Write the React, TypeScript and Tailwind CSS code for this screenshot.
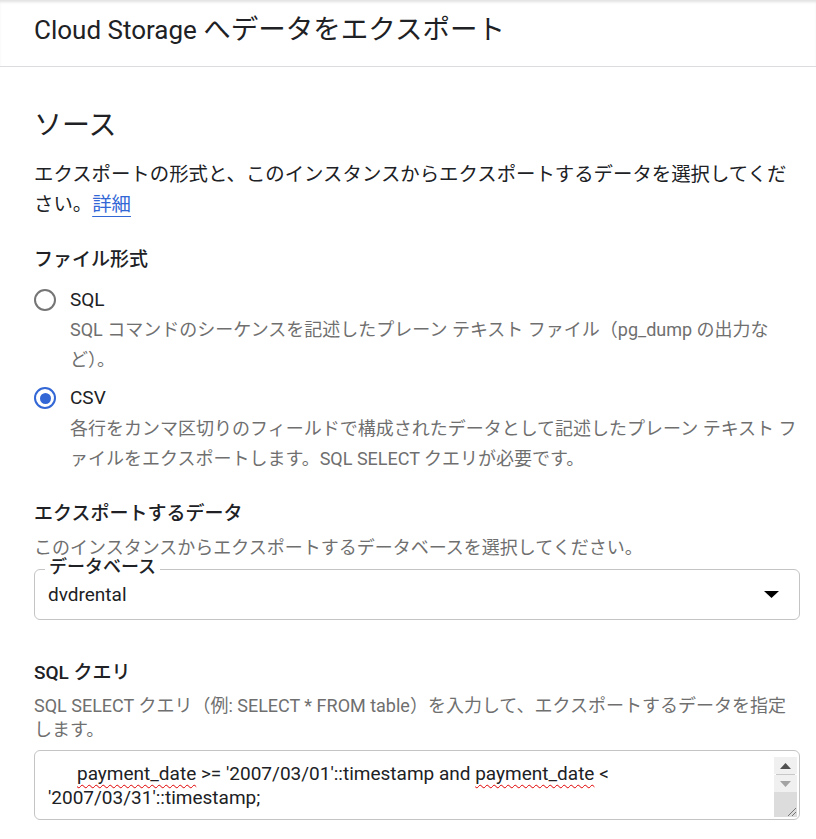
import React from "react";

const FONT = "font-['Roboto','Noto_Sans_CJK_JP',sans-serif]";

function Radio({ checked }: { checked: boolean }) {
  return (
    <div
      className={`relative w-[22px] h-[22px] rounded-full border-[2.5px] shrink-0 flex items-center justify-center ${
        checked ? "border-[#3367d6]" : "border-[#757575]"
      }`}
    >
      {checked && <div className="w-[11px] h-[11px] rounded-full bg-[#3367d6]" />}
    </div>
  );
}

export default function App() {
  return (
    <div className={`${FONT} bg-white text-[#202124] w-[816px] h-[839px] overflow-hidden`}>
      {/* header */}
      <div className="h-[67px] flex items-center pb-[6px] pl-[34px] border-b border-[#dadce0] shadow-[inset_0_3px_3px_-1px_rgba(0,0,0,0.12)]">
        <h1 className="text-[26px] leading-[34px] font-normal">
          Cloud Storage <span className="text-[27.5px]">へデータをエクスポート</span>
        </h1>
      </div>

      <div className="pl-[34px] pr-[16px]">
        <h2 className="mt-[41px] text-[28px] leading-[36px] font-normal">ソース</h2>
        <p className="mt-[16px] text-[19.4px] leading-[30px]">
          エクスポートの形式と、このインスタンスからエクスポートするデータを選択してください。
          <a className="text-[#3367d6] underline underline-offset-[5px] decoration-1">詳細</a>
        </p>

        <h3 className="mt-[26px] text-[19px] leading-[28px] font-medium">ファイル形式</h3>

        <div className="mt-[12px] flex items-center gap-[14px] h-[28px]">
          <Radio checked={false} />
          <span className="text-[19px] leading-[28px]">SQL</span>
        </div>
        <p className="mt-[1px] pl-[36px] text-[18px] leading-[29.5px] text-[#6f6f6f]">
          SQL コマンドのシーケンスを記述したプレーン テキスト ファイル（pg_dump の出力など）。
        </p>

        <div className="mt-[10px] flex items-center gap-[14px] h-[28px]">
          <Radio checked={true} />
          <span className="text-[19px] leading-[28px]">CSV</span>
        </div>
        <p className="mt-[2px] pl-[36px] text-[18px] leading-[29.5px] text-[#6f6f6f]">
          各行をカンマ区切りのフィールドで構成されたデータとして記述したプレーン テキスト ファイルをエクスポートします。SQL SELECT クエリが必要です。
        </p>

        <h3 className="mt-[27px] text-[19px] leading-[28px] font-medium">エクスポートするデータ</h3>
        <p className="mt-[7px] text-[18px] leading-[26px] text-[#6f6f6f]">
          このインスタンスからエクスポートするデータベースを選択してください。
        </p>

        <div className="relative mt-[8px] h-[51px] border border-[#c4c4c4] rounded-[6px] flex items-center pl-[13px] pr-[20px]">
          <span className="absolute left-[10px] top-[-15px] bg-white px-[4px] text-[18px] leading-[24px] font-medium">
            データベース
          </span>
          <span className="flex-1 text-[19px] leading-[28px]">dvdrental</span>
          <svg width="15" height="7" viewBox="0 0 15 7">
            <path d="M0 0 L15 0 L7.5 7 Z" fill="#000" />
          </svg>
        </div>

        <h3 className="mt-[39px] text-[19px] leading-[28px] font-medium">SQL クエリ</h3>
        <p className="mt-[7px] text-[18px] leading-[24px] text-[#6f6f6f]">
          SQL SELECT クエリ（例: SELECT * FROM table）を入力して、エクスポートするデータを指定します。
        </p>

        <div className="mt-[8px] h-[70px] border border-[#c4c4c4] rounded-[6px] flex overflow-hidden">
          <div className="flex-1 pl-[13px] pt-[11px] text-[19px] leading-[24px] whitespace-pre">
            <div className="pl-[29px]">
              <span className="underline decoration-wavy decoration-[#e00000] decoration-1 underline-offset-[4px]">payment_date</span>
              {" >= '2007/03/01'::timestamp and "}
              <span className="underline decoration-wavy decoration-[#e00000] decoration-1 underline-offset-[4px]">payment_date</span>
              {" <"}
            </div>
            <div>'2007/03/31'::timestamp;</div>
          </div>
          <div className="w-[23px] mt-[6px] mb-[2px] mr-[2px] flex flex-col">
            <div className="h-[17px] bg-[#f0f0f0] flex items-center justify-center">
              <svg width="11" height="6" viewBox="0 0 11 6">
                <path d="M0 6 L11 6 L5.5 0 Z" fill="#505050" />
              </svg>
            </div>
            <div className="h-[1px] bg-[#c8c8c8] mx-[2px]" />
            <div className="h-[17px] bg-[#f0f0f0] flex items-center justify-center">
              <svg width="11" height="6" viewBox="0 0 11 6">
                <path d="M0 0 L11 0 L5.5 6 Z" fill="#a3a3a3" />
              </svg>
            </div>
            <div className="flex-1 bg-[#dcdcdc] flex items-end justify-end">
              <svg width="12" height="12" viewBox="0 0 12 12">
                <path d="M11 3 L3 11 M11 7 L7 11" stroke="#777" strokeWidth="1" />
              </svg>
            </div>
          </div>
        </div>
      </div>
    </div>
  );
}
